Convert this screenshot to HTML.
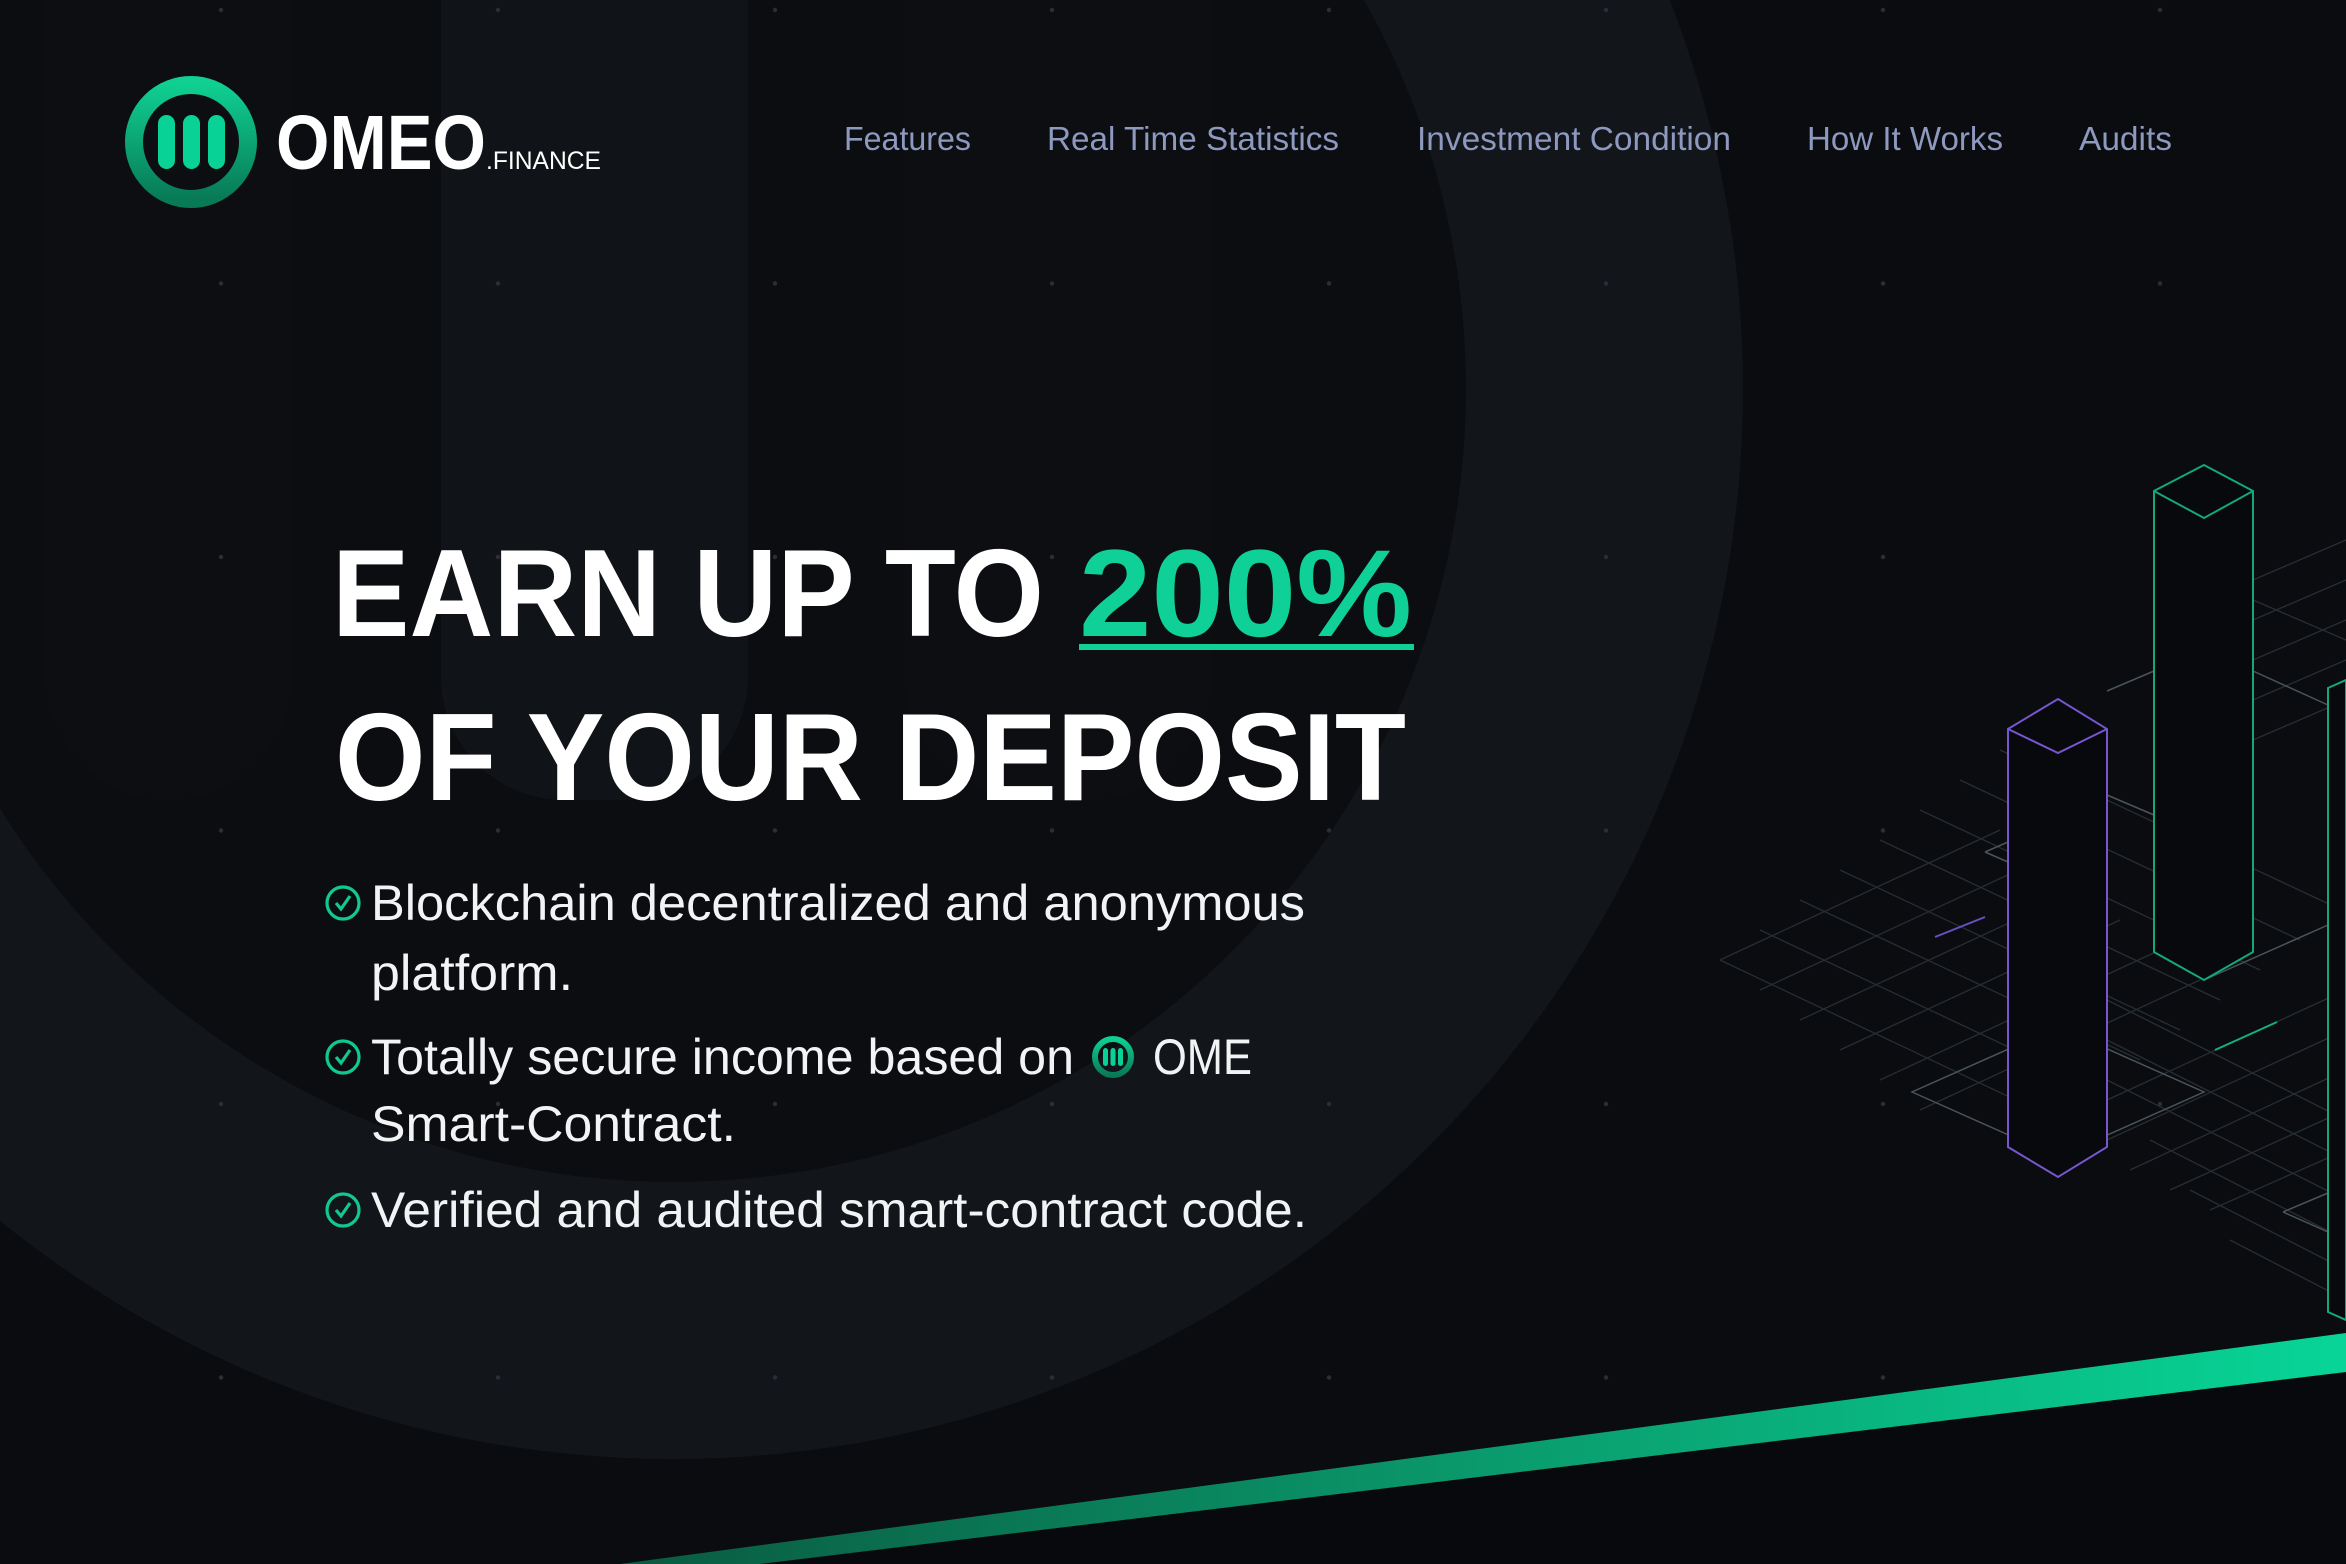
<!DOCTYPE html>
<html><head><meta charset="utf-8"><style>
html,body{margin:0;padding:0;background:#0a0c10;}
svg{display:block}
</style></head><body>
<svg width="2346" height="1564" viewBox="0 0 2346 1564" xmlns="http://www.w3.org/2000/svg" font-family="'Liberation Sans', sans-serif">
<defs>
<linearGradient id="st" x1="0" y1="0" x2="1" y2="0">
<stop offset="0" stop-color="#0a5a40"/><stop offset="0.5" stop-color="#0a9a6b"/><stop offset="1" stop-color="#08d597"/>
</linearGradient>
<linearGradient id="lg" x1="0" y1="0" x2="0" y2="1">
<stop offset="0" stop-color="#0fcf91"/><stop offset="1" stop-color="#087a55"/>
</linearGradient>
<pattern id="dots" x="0" y="0" width="277" height="273.5" patternUnits="userSpaceOnUse">
<circle cx="221" cy="10" r="2.2" fill="#2b2f35"/>
</pattern>
<clipPath id="inner"><circle cx="673" cy="389" r="793"/></clipPath>
</defs>
<rect width="2346" height="1564" fill="#0a0c10"/>
<!-- big ring -->
<circle cx="673" cy="389" r="1070" fill="#121519"/>
<circle cx="673" cy="389" r="793" fill="#0b0d11"/>
<!-- pills -->
<g fill="#101317">
<rect x="45" y="-300" width="247" height="1100" rx="123"/>
<rect x="441" y="-300" width="307" height="1100" rx="123"/>
<rect x="905" y="-300" width="307" height="1100" rx="123"/>
</g>
<g fill="#0c0e12" clip-path="url(#inner)">
<rect x="45" y="-300" width="247" height="1100" rx="123"/>
<rect x="905" y="-300" width="307" height="1100" rx="123"/>
</g>
<rect width="2346" height="1564" fill="url(#dots)"/>
<!-- bottom dark -->
<polygon points="640,1564 2346,1336 2346,1564" fill="#07090c"/>
<polygon points="620,1564 2346,1333 2346,1372 760,1564" fill="url(#st)"/>
<!-- isometric chart -->
<g stroke="#2a3238" stroke-width="1.3" fill="none" opacity="0.9">
<path d="M1720,960 L2058,1120 M1760,930 L2100,1090 M1800,900 L2140,1060 M1840,870 L2180,1030 M1880,840 L2220,1000 M1920,810 L2260,970 M1960,780 L2300,940 M2000,750 L2346,912"/>
<path d="M1720,960 L2000,830 M1760,990 L2040,860 M1800,1020 L2080,890 M1840,1050 L2120,920 M1880,1080 L2160,950 M1920,1110 L2200,980"/>
<path d="M2107,1000 L2346,1120 M2107,1040 L2346,1160 M2107,1080 L2346,1200 M2150,1140 L2346,1240 M2190,1190 L2346,1270 M2230,1240 L2346,1300"/>
<path d="M2107,1100 L2346,990 M2107,1140 L2346,1030 M2130,1170 L2346,1070 M2170,1190 L2346,1110 M2210,1210 L2346,1150"/>
<path d="M2253,620 L2346,580 M2253,660 L2346,620 M2253,700 L2346,660 M2253,740 L2346,700 M2253,580 L2346,540 M2253,600 L2346,640"/>
</g>
<g stroke="#4a545c" stroke-width="1.5" fill="none">
<path d="M1912,1092 L2058,1157 L2204,1092 L2058,1027 Z"/>
<path d="M2107,691 L2154,671 M2107,795 L2154,815 M1985,852 L2008,862 M1985,852 L2008,842"/>
<path d="M2253,671 L2328,705 M2204,980 L2328,925"/>
<path d="M2283,1212 L2328,1193 M2283,1212 L2328,1232"/>
</g>
<path d="M1935,937 L1985,917" stroke="#6a4fc0" stroke-width="2"/>
<path d="M2215,1050 L2277,1022" stroke="#12b07e" stroke-width="2"/>
<g stroke="#7756cf" stroke-width="2" fill="#07090c">
<path d="M2008,729 L2058,699 L2107,729 L2107,1147 L2058,1177 L2008,1147 Z"/>
<path d="M2008,729 L2058,753 L2107,729" fill="none"/>
</g>
<g stroke="#13a77a" stroke-width="2" fill="#07090c">
<path d="M2154,491 L2204,465 L2253,491 L2253,952 L2204,980 L2154,952 Z"/>
<path d="M2154,491 L2204,518 L2253,491" fill="none"/>
<path d="M2328,688 L2346,680 L2346,1320 L2328,1312 Z"/>
</g>
<!-- logo -->
<circle cx="191" cy="142" r="57" fill="none" stroke="url(#lg)" stroke-width="18"/>
<g fill="#08d295">
<rect x="158" y="115" width="17" height="54" rx="8.5"/>
<rect x="183" y="115" width="17" height="54" rx="8.5"/>
<rect x="208" y="115" width="17" height="54" rx="8.5"/>
</g>
<text x="276" y="169" font-size="77" font-weight="bold" fill="#fff" textLength="210" lengthAdjust="spacingAndGlyphs">OMEO</text>
<text x="486" y="169" font-size="25" fill="#fff" textLength="115" lengthAdjust="spacingAndGlyphs">.FINANCE</text>
<!-- nav -->
<g font-size="33" fill="#8e99bf">
<text x="844" y="150" textLength="127" lengthAdjust="spacingAndGlyphs">Features</text>
<text x="1047" y="150" textLength="292" lengthAdjust="spacingAndGlyphs">Real Time Statistics</text>
<text x="1417" y="150" textLength="314" lengthAdjust="spacingAndGlyphs">Investment Condition</text>
<text x="1807" y="150" textLength="196" lengthAdjust="spacingAndGlyphs">How It Works</text>
<text x="2079" y="150" textLength="93" lengthAdjust="spacingAndGlyphs">Audits</text>
</g>
<!-- headline -->
<g font-size="124" font-weight="bold" fill="#fff">
<text x="332" y="636" textLength="712" lengthAdjust="spacingAndGlyphs">EARN UP TO</text>
<text x="1079" y="636" fill="#0fd197" textLength="333" lengthAdjust="spacingAndGlyphs">200%</text>
<text x="335" y="800" textLength="1071" lengthAdjust="spacingAndGlyphs">OF YOUR DEPOSIT</text>
</g>
<rect x="1079" y="644" width="335" height="6" fill="#0fd197"/>
<!-- bullets -->
<g font-size="50" fill="#f2f3f5">
<text x="371" y="920" textLength="934" lengthAdjust="spacingAndGlyphs">Blockchain decentralized and anonymous</text>
<text x="371" y="990" textLength="202" lengthAdjust="spacingAndGlyphs">platform.</text>
<text x="371" y="1074" textLength="703" lengthAdjust="spacingAndGlyphs">Totally secure income based on</text>
<text x="1153" y="1074" textLength="99" lengthAdjust="spacingAndGlyphs">OME</text>
<text x="371" y="1141" textLength="365" lengthAdjust="spacingAndGlyphs">Smart-Contract.</text>
<text x="371" y="1227" textLength="936" lengthAdjust="spacingAndGlyphs">Verified and audited smart-contract code.</text>
</g>
<g stroke="#11c98e" stroke-width="3.2" fill="none">
<circle cx="343" cy="903" r="16"/><path d="M336,903 L341,909 L350,896"/>
<circle cx="343" cy="1057" r="16"/><path d="M336,1057 L341,1063 L350,1050"/>
<circle cx="343" cy="1210" r="16"/><path d="M336,1210 L341,1216 L350,1203"/>
</g>
<circle cx="1113" cy="1057" r="18" fill="none" stroke="url(#lg)" stroke-width="6"/>
<g fill="#08d295">
<rect x="1103" y="1048" width="5" height="18" rx="2.5"/>
<rect x="1110.5" y="1048" width="5" height="18" rx="2.5"/>
<rect x="1118" y="1048" width="5" height="18" rx="2.5"/>
</g>
</svg>
</body></html>
